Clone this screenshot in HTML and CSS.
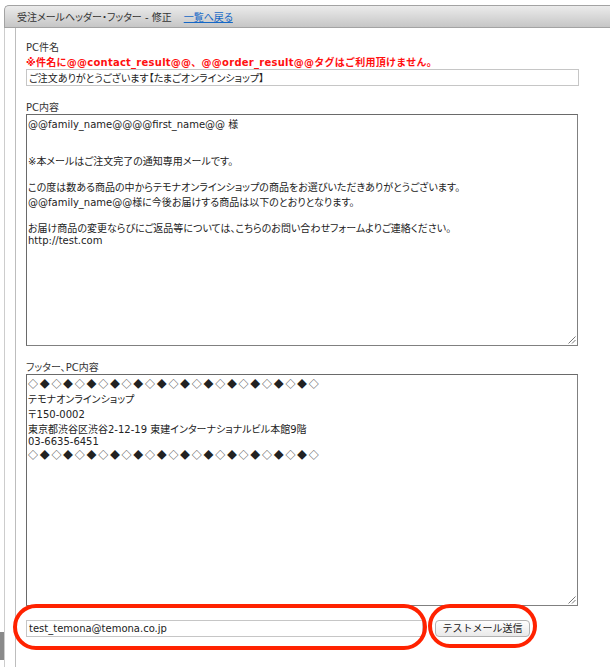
FILE: index.html
```html
<!DOCTYPE html>
<html lang="ja">
<head>
<meta charset="utf-8">
<title>受注メールヘッダー・フッター - 修正</title>
<link rel="stylesheet" href="styles.css">
</head>
<body>
<div class="thumb"></div>
<div class="frame">
  <div class="header">
    <span class="title">受注メールヘッダー・フッター - 修正</span>
    <a class="back" href="#">一覧へ戻る</a>
  </div>
  <div class="body">
    <div class="panel">
      <div class="label">PC件名</div>
      <div class="warn">※件名に@@contact_result@@、@@order_result@@タグはご利用頂けません。</div>
      <input class="subject" type="text" value="ご注文ありがとうございます【たまごオンラインショップ】">

      <div class="label gap">PC内容</div>
      <div class="area" role="textbox" aria-multiline="true">
        <div>@@family_name@@@@first_name@@ 様</div>
        <div><br></div>
        <div><br></div>
        <div>※本メールはご注文完了の通知専用メールです。</div>
        <div><br></div>
        <div>この度は数ある商品の中からテモナオンラインショップの商品をお選びいただきありがとうございます。</div>
        <div>@@family_name@@様に今後お届けする商品は以下のとおりとなります。</div>
        <div><br></div>
        <div>お届け商品の変更ならびにご返品等については、こちらのお問い合わせフォームよりご連絡ください。</div>
        <div>http://test.com</div>
        <svg class="grip" width="9" height="9" viewBox="0 0 9 9"><path d="M8.5 1.5 L1.5 8.5 M8.5 5 L5 8.5" stroke="#777" stroke-width="1" fill="none"/></svg>
      </div>

      <div class="label gap2">フッター、PC内容</div>
      <div class="area" role="textbox" aria-multiline="true">
        <div class="dia">◇◆◇◆◇◆◇◆◇◆◇◆◇◆◇◆◇◆◇◆◇◆◇◆◇</div>
        <div>テモナオンラインショップ</div>
        <div>〒150-0002</div>
        <div>東京都渋谷区渋谷2-12-19 東建インターナショナルビル本館9階</div>
        <div>03-6635-6451</div>
        <div class="dia">◇◆◇◆◇◆◇◆◇◆◇◆◇◆◇◆◇◆◇◆◇◆◇◆◇</div>
        <svg class="grip" width="9" height="9" viewBox="0 0 9 9"><path d="M8.5 1.5 L1.5 8.5 M8.5 5 L5 8.5" stroke="#777" stroke-width="1" fill="none"/></svg>
      </div>

      <div class="sendrow">
        <span class="ring ring-mail"><span class="mail" role="textbox">test_temona@temona.co.jp</span></span>
        <span class="ring ring-btn"><button class="btn" type="button">テストメール送信</button></span>
      </div>
    </div>
  </div>
</div>
</body>
</html>
```

FILE: styles.css
```css
html, body {
  margin: 0;
  padding: 0;
  background: #fff;
}
body {
  position: relative;
  font-family: "DejaVu Sans", "Noto Sans CJK JP", sans-serif;
  font-size: 10px;
  color: #333;
  font-feature-settings: "palt" 1;
  height: 667px;
  overflow: hidden;
}
.thumb {
  position: absolute;
  left: 0;
  top: 632px;
  width: 4px;
  height: 28px;
  background: #8a8a8a;
}
.frame {
  margin: 5px 0 0 4px;
}
.header {
  display: flex;
  align-items: center;
  height: 21px;
  padding-left: 12px;
  border: 1px solid #a3a3a3;
  border-right: none;
  border-top-left-radius: 5px;
  background: linear-gradient(#ebebeb, #c6c6c6);
  color: #333;
}
.title {
  margin-right: 12px;
}
.back {
  color: #1467c6;
  text-decoration: underline;
}
.body {
  border-left: 1px solid #cdcdcd;
  padding-left: 10px;
  height: 650px;
}
.panel {
  border-left: 1px solid #bdbdbd;
  padding: 11px 0 0 10px;
  height: 100%;
  box-sizing: border-box;
}
.label {
  color: #333;
}
.label.gap {
  margin-top: 13px;
}
.label.gap2 {
  margin-top: 13px;
}
.warn {
  color: #ff1010;
  font-weight: bold;
  font-feature-settings: normal;
  letter-spacing: 0.25px;
}
.subject {
  display: block;
  box-sizing: border-box;
  width: 553px;
  height: 17px;
  margin: 0;
  padding: 0 2px;
  border: 1px solid #c6c6c6;
  font: inherit;
  font-feature-settings: "palt" 1;
  color: #222;
  background: #fff;
}
.area {
  position: relative;
  box-sizing: border-box;
  width: 552px;
  height: 232px;
  padding: 1px 1px;
  border: 1px solid #808080;
  border-top-color: #6a6a6a;
  border-left-color: #6a6a6a;
  color: #222;
  overflow: hidden;
  background: #fff;
}
.area .dia {
  font-family: "Noto Sans CJK JP", "DejaVu Sans", sans-serif;
  font-feature-settings: normal;
  letter-spacing: 1.7px;
  color: #222;
}
.grip {
  position: absolute;
  right: 1px;
  bottom: 1px;
}
.sendrow {
  display: flex;
  align-items: center;
  gap: 12px;
  margin-top: 14px;
}
.ring {
  position: relative;
  display: flex;
}
.ring::after {
  content: "";
  position: absolute;
  border: 4px solid #ff2200;
  border-radius: 24px;
  pointer-events: none;
}
.ring-mail::after {
  left: -13px;
  right: -4px;
  top: -16px;
  bottom: -13px;
}
.ring-btn::after {
  left: -7px;
  right: -7px;
  top: -16px;
  bottom: -11px;
}
.mail {
  display: block;
  box-sizing: border-box;
  width: 397px;
  height: 17px;
  padding: 0 2px;
  border: 1px solid #c6c6c6;
  font-size: 10px;
  line-height: 15px;
  color: #222;
  background: #fff;
  white-space: nowrap;
  overflow: hidden;
}
.btn {
  box-sizing: border-box;
  width: 95px;
  height: 17px;
  margin: 0;
  padding: 0 6px;
  border: 1px solid #b2b2b2;
  border-radius: 4px;
  background: linear-gradient(#ffffff, #e9e9e9);
  font-family: "DejaVu Sans", "Noto Sans CJK JP", sans-serif;
  font-size: 10px;
  font-feature-settings: normal;
  color: #222;
  line-height: 15px;
}
```
